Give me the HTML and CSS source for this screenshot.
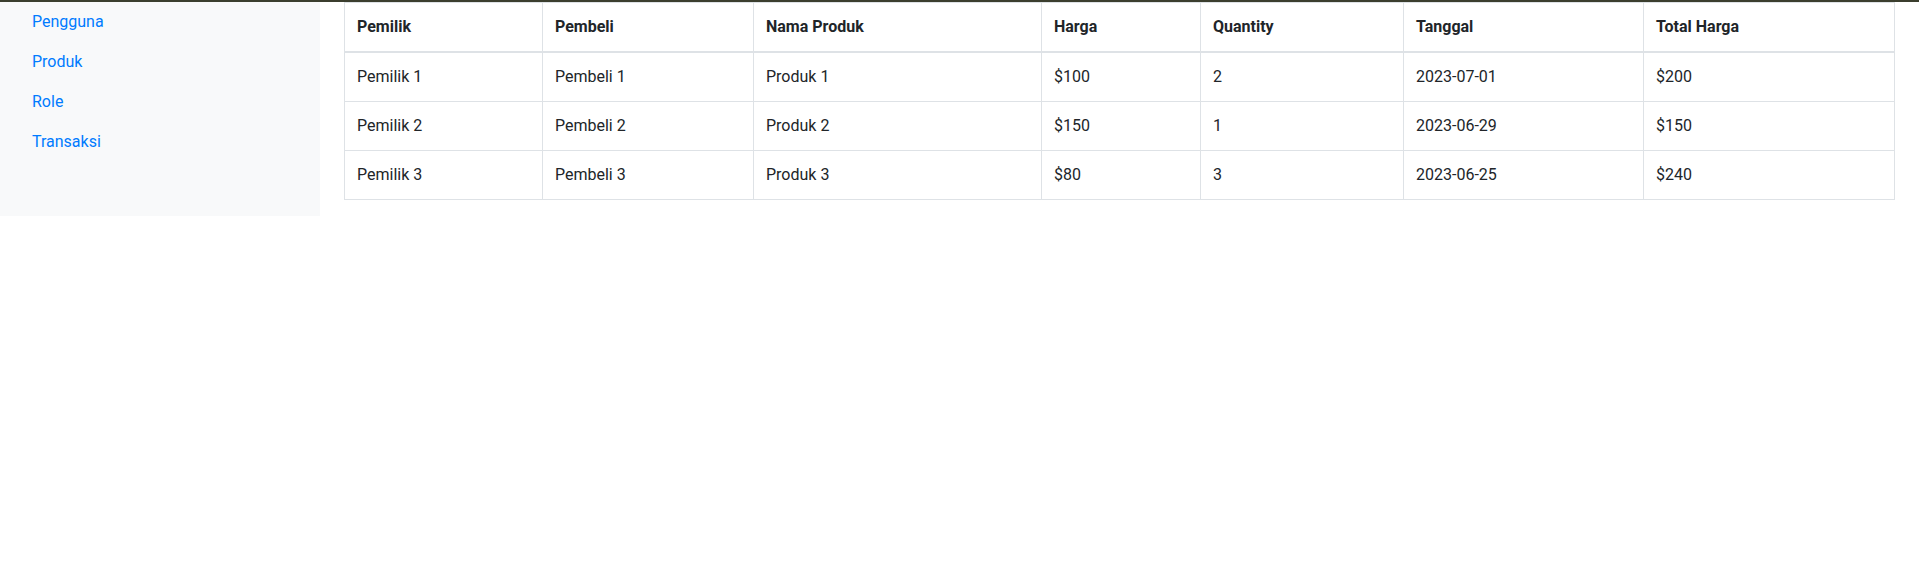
FILE: index.html
```html
<!DOCTYPE html>
<html lang="id">
<head>
<meta charset="utf-8">
<title>Transaksi</title>
<link rel="stylesheet" href="styles.css">
</head>
<body>
<div class="topbar"></div>
<div class="layout">
  <aside class="sidebar">
    <ul class="nav">
      <li><a class="nav-link" href="#">Pengguna</a></li>
      <li><a class="nav-link" href="#">Produk</a></li>
      <li><a class="nav-link" href="#">Role</a></li>
      <li><a class="nav-link" href="#">Transaksi</a></li>
    </ul>
  </aside>
  <main class="content">
    <table class="table">
      <colgroup>
        <col class="c-pemilik">
        <col class="c-pembeli">
        <col class="c-produk">
        <col class="c-harga">
        <col class="c-qty">
        <col class="c-tanggal">
        <col>
      </colgroup>
      <thead>
        <tr>
          <th>Pemilik</th>
          <th>Pembeli</th>
          <th>Nama Produk</th>
          <th>Harga</th>
          <th>Quantity</th>
          <th>Tanggal</th>
          <th>Total Harga</th>
        </tr>
      </thead>
      <tbody>
        <tr>
          <td>Pemilik 1</td>
          <td>Pembeli 1</td>
          <td>Produk 1</td>
          <td>$100</td>
          <td>2</td>
          <td>2023-07-01</td>
          <td>$200</td>
        </tr>
        <tr>
          <td>Pemilik 2</td>
          <td>Pembeli 2</td>
          <td>Produk 2</td>
          <td>$150</td>
          <td>1</td>
          <td>2023-06-29</td>
          <td>$150</td>
        </tr>
        <tr>
          <td>Pemilik 3</td>
          <td>Pembeli 3</td>
          <td>Produk 3</td>
          <td>$80</td>
          <td>3</td>
          <td>2023-06-25</td>
          <td>$240</td>
        </tr>
      </tbody>
    </table>
  </main>
</div>
</body>
</html>
```
FILE: styles.css
```css
* { box-sizing: border-box; }

body {
  margin: 0;
  font-family: "Segoe UI", Roboto, "Liberation Sans", sans-serif;
  font-size: 16px;
  line-height: 1.5;
  color: #212529;
  background: #fff;
}

.topbar {
  height: 2px;
  background: #3b3e2e;
}

.layout {
  display: flex;
  align-items: flex-start;
}

.sidebar {
  flex: 0 0 320px;
  height: 214px;
  background: #f8f9fa;
  padding-left: 16px;
}

.nav {
  list-style: none;
  margin: 0;
  padding: 0;
}

.nav-link {
  display: block;
  padding: 8px 16px;
  color: #007bff;
  text-decoration: none;
}

.content {
  flex: 1;
  min-width: 0;
  padding: 0 24px;
}

.table {
  width: 100%;
  border-collapse: collapse;
  table-layout: fixed;
}

.c-pemilik { width: 198px; }
.c-pembeli { width: 211px; }
.c-produk { width: 288px; }
.c-harga { width: 159px; }
.c-qty { width: 203px; }
.c-tanggal { width: 240px; }

.table th,
.table td {
  padding: 12px;
  border: 1px solid #dee2e6;
  text-align: left;
  vertical-align: top;
}

.table th {
  font-weight: 700;
}

.table thead th {
  border-bottom: 2px solid #dee2e6;
}
```
